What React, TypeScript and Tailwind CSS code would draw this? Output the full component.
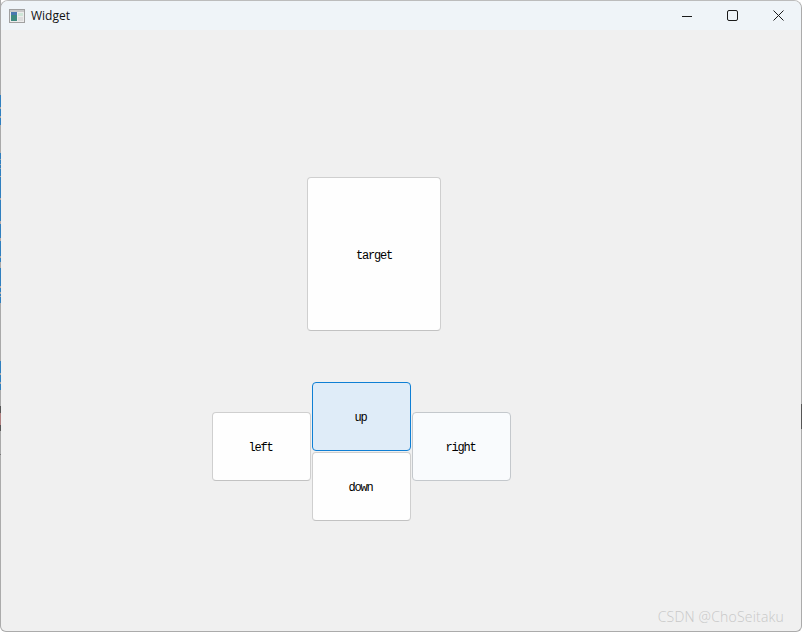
const leftEdge: [number, string][] = [
  [95, '#a9a9a9'], [12, '#2f7fbf'], [2, '#a9a9a9'], [7, '#2f7fbf'], [2, '#a9a9a9'], [7, '#2f7fbf'],
  [28, '#a9a9a9'], [6, '#2f7fbf'], [1, '#8fa3b5'], [4, '#2f7fbf'], [1, '#8fa3b5'], [3, '#2f7fbf'], [1, '#8fa3b5'], [7, '#2f7fbf'],
  [1, '#a9a9a9'], [21, '#2f7fbf'], [2, '#b3a9a9'], [21, '#2f7fbf'], [3, '#b3a9a9'], [14, '#2f7fbf'], [3, '#b3a9a9'], [15, '#2f7fbf'],
  [2, '#a9a9a9'], [4, '#2f7fbf'], [6, '#a9a9a9'], [18, '#2f7fbf'], [2, '#b3a9a9'], [4, '#2f7fbf'], [2, '#a9a9a9'], [2, '#2f7fbf'], [1, '#a9a9a9'], [6, '#2f7fbf'],
  [58, '#a9a9a9'], [12, '#2f7fbf'], [2, '#a9a9a9'], [7, '#2f7fbf'], [2, '#a9a9a9'], [6, '#2f7fbf'],
  [16, '#a9a9a9'], [7, '#555555'], [12, '#b08080'], [6, '#555555'], [23, '#a9a9a9'], [1, '#777777'],
]

function DirButton({ label, className = '' }: { label: string; className?: string }) {
  return (
    <button
      className={`w-[99px] h-[69px] pt-[3px] pr-[2px] rounded-[4px] border border-[#cfcfcf] border-b-[#c2c2c2] bg-[#fefefe] text-[12px] tracking-[-1.2px] text-black flex items-center justify-center font-['Liberation_Mono',monospace] ${className}`}
    >
      {label}
    </button>
  )
}

export default function App() {
  return (
    <div className="relative w-[802px] h-[632px] rounded-t-[8px] rounded-b-[6px] border border-[#ababab] border-t-[#bcbcbc] bg-[#f0f0f0] font-['Open_Sans',sans-serif]">
      {/* title bar */}
      <div className="h-[29px] rounded-t-[7px] bg-[#eff4f8] flex items-center justify-between">
        <div className="flex items-center pl-[8px]">
          <svg width="16" height="14" viewBox="0 0 16 14">
            <rect x="0.5" y="0.5" width="15" height="13" fill="#ececec" stroke="#a0a0a0" />
            <rect x="1" y="1" width="14" height="2" fill="#c9c9c9" />
            <rect x="2" y="3" width="6" height="9" fill="#3f8a80" />
            <rect x="2" y="3" width="6" height="3" fill="#4a78b0" />
            <rect x="9" y="4" width="5" height="3" fill="#cfe6d8" />
            <rect x="9" y="8" width="5" height="4" fill="#dddddd" />
          </svg>
          <span className="ml-[6px] text-[12px] text-[#111111] leading-none">Widget</span>
        </div>
        <div className="flex items-center">
          <div className="w-[46px] h-[29px] pl-[2px] flex items-center justify-center">
            <svg width="10" height="10" viewBox="0 0 10 10">
              <path d="M0 5.5h10" stroke="#1a1a1a" strokeWidth="1" fill="none" />
            </svg>
          </div>
          <div className="w-[46px] h-[29px] flex items-center justify-center">
            <svg width="11" height="11" viewBox="0 0 11 11">
              <rect x="0.5" y="0.5" width="10" height="10" rx="1.5" stroke="#1a1a1a" strokeWidth="1" fill="none" />
            </svg>
          </div>
          <div className="w-[46px] h-[29px] flex items-center justify-center">
            <svg width="11" height="11" viewBox="0 0 11 11">
              <path d="M0.5 0.5l10 10M10.5 0.5l-10 10" stroke="#1a1a1a" strokeWidth="1" fill="none" />
            </svg>
          </div>
        </div>
      </div>

      {/* client area */}
      <div className="pt-[147px] pl-[211px]">
        <div className="ml-[95px] w-[134px] h-[154px] pt-[3px] rounded-[4px] border border-[#cfcfcf] border-b-[#c2c2c2] bg-[#fefefe] text-[12px] tracking-[-1.2px] text-black flex items-center justify-center font-['Liberation_Mono',monospace]">
          target
        </div>
        <div className="mt-[51px] flex gap-[1px]">
          <DirButton label="left" className="mt-[30px]" />
          <div className="flex flex-col gap-[1px]">
            <DirButton label="up" className="!bg-[#dfecf8] !border-[#0f7fd4]" />
            <DirButton label="down" />
          </div>
          <DirButton label="right" className="mt-[30px] !bg-[#f9fbfd] !border-[#c4c8cc]" />
        </div>
      </div>

      {/* 1px of the desktop showing through at the window edges */}
      <div className="absolute left-[-1px] top-[-1px] w-[1px] flex flex-col">
        {leftEdge.map(([h, c], i) => (
          <div key={i} style={{ height: h, backgroundColor: c }} />
        ))}
      </div>
      <div className="absolute right-[-1px] top-[403px] w-[1px] h-[25px] bg-[#555555]" />

      {/* watermark */}
      <span className="absolute right-[17px] bottom-[5px] text-[14px] font-light tracking-[0.2px] leading-[18px] text-[#c8c8c8]">
        CSDN @ChoSeitaku
      </span>
    </div>
  )
}
